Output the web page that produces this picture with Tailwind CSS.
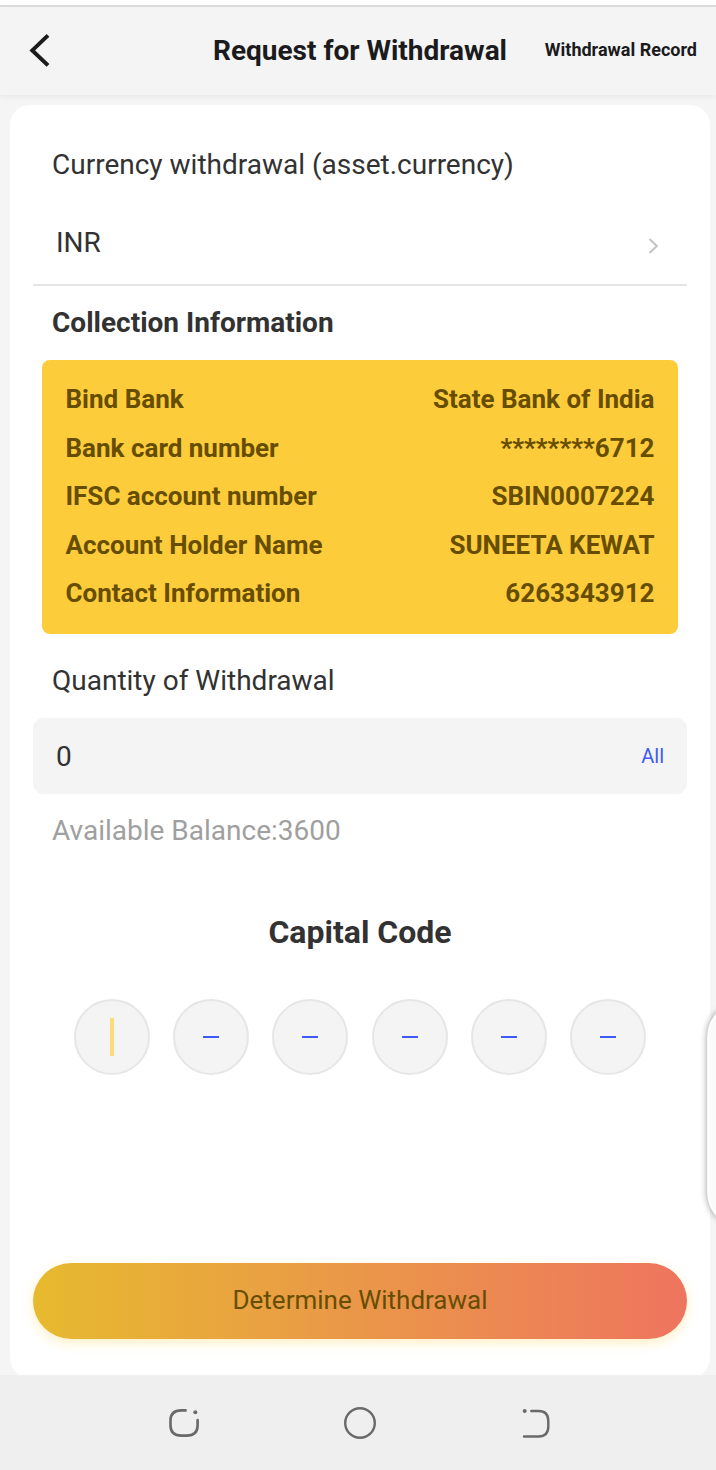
<!DOCTYPE html>
<html lang="en">
<head>
  <meta charset="UTF-8" />
  <meta name="viewport" content="width=device-width, initial-scale=1.0" />
  <title>Request for Withdrawal</title>
  <script src="https://cdn.jsdelivr.net/npm/@tailwindcss/browser@4"></script>
</head>
<body class="relative w-[716px] h-[1470px] overflow-hidden bg-[#f5f5f5] font-['Roboto',sans-serif] text-[28px] leading-10 text-[#323233]">
  <div class="h-[7px] bg-white border-b-2 border-[#dcdcdc]"></div>

  <header class="h-22 pl-1 grid grid-cols-[1fr_auto_1fr] items-center bg-[#f4f4f4] text-[#1b1b1d] shadow-[0_2px_5px_rgba(0,0,0,0.05)]">
    <button class="pl-6 justify-self-start" aria-label="Back">
      <svg class="block w-6 h-9" viewBox="0 0 24 36" fill="none" stroke="currentColor" stroke-width="4"><path d="M20 2.4 4.3 17.4 20 32.4"/></svg>
    </button>
    <h1 id="title" class="font-bold whitespace-nowrap">Request for Withdrawal</h1>
    <a id="record" class="justify-self-end pr-[19px] -mt-[2px] text-[18px] font-bold whitespace-nowrap">Withdrawal Record</a>
  </header>

  <main class="w-[700px] h-[1273px] ml-[10px] mt-[10px] px-[23px] pt-10 flex flex-col bg-white rounded-[20px]">
    <p class="px-[19px]">Currency withdrawal (asset.currency)</p>
    <div class="h-[81px] mt-5 pl-[23px] pr-7 pb-[3px] flex items-center justify-between border-b-2 border-[#e5e5e5]">
      <span>INR</span>
      <svg class="w-[12px] h-[18px] mt-[6px]" viewBox="0 0 12 18" fill="none" stroke="#c3c3c3" stroke-width="2"><path d="M2.5 2 9.8 9 2.5 16"/></svg>
    </div>

    <h2 class="px-[19px] mt-[17px] font-bold">Collection Information</h2>
    <dl class="h-[274px] mx-[9px] mt-[17px] px-[23.5px] py-[15px] grid grid-cols-[auto_auto] auto-rows-[48.5px] items-center justify-between rounded-lg bg-[#fdcc3a] text-[26px] font-bold text-[#664d00]">
      <dt>Bind Bank</dt><dd class="text-right">State Bank of India</dd>
      <dt>Bank card number</dt><dd class="text-right">********6712</dd>
      <dt>IFSC account number</dt><dd class="text-right">SBIN0007224</dd>
      <dt>Account Holder Name</dt><dd class="text-right">SUNEETA KEWAT</dd>
      <dt>Contact Information</dt><dd class="text-right">6263343912</dd>
    </dl>

    <p class="px-[19px] mt-[27px]">Quantity of Withdrawal</p>
    <div class="h-[76px] mt-[17px] px-[23px] flex items-center justify-between rounded-[11px] bg-[#f4f4f4]">
      <span class="pt-[2px]">0</span>
      <button class="text-[20px] text-[#3f5bf6]">All</button>
    </div>
    <p class="px-[19px] mt-[17px] text-[#9f9f9f]">Available Balance:3600</p>

    <h2 class="mt-[61px] text-center text-[32px] font-bold">Capital Code</h2>
    <div class="mt-[47px] mx-[41px] flex justify-between">
      <div class="size-[76px] flex items-center justify-center rounded-full border-2 border-[#e6e6e6] bg-[#f4f4f4]"><i class="w-1 h-[38px] bg-[#fadb7d]"></i></div>
      <div class="size-[76px] flex items-center justify-center rounded-full border-2 border-[#e6e6e6] bg-[#f4f4f4]"><i class="w-4 h-[2px] bg-[#3f5bf6]"></i></div>
      <div class="size-[76px] flex items-center justify-center rounded-full border-2 border-[#e6e6e6] bg-[#f4f4f4]"><i class="w-4 h-[2px] bg-[#3f5bf6]"></i></div>
      <div class="size-[76px] flex items-center justify-center rounded-full border-2 border-[#e6e6e6] bg-[#f4f4f4]"><i class="w-4 h-[2px] bg-[#3f5bf6]"></i></div>
      <div class="size-[76px] flex items-center justify-center rounded-full border-2 border-[#e6e6e6] bg-[#f4f4f4]"><i class="w-4 h-[2px] bg-[#3f5bf6]"></i></div>
      <div class="size-[76px] flex items-center justify-center rounded-full border-2 border-[#e6e6e6] bg-[#f4f4f4]"><i class="w-4 h-[2px] bg-[#3f5bf6]"></i></div>
    </div>

    <button class="h-[76px] mt-[188px] pb-[2px] shrink-0 rounded-full bg-linear-[90deg,#e7ba2e,#ea9749_50%,#ee745e] text-[26px] text-[#664d00] shadow-[0_4px_12px_rgba(253,204,58,0.3)]">Determine Withdrawal</button>
  </main>

  <!-- edge panel handle -->
  <svg class="absolute right-0 top-[1000px] w-5 h-[230px]" viewBox="0 0 20 230">
    <path class="drop-shadow-[0_0_3px_rgba(0,0,0,0.35)]" d="M24 10Q11 20 11 38V192Q11 209 24 220Z" fill="#fafafa" stroke="#d0d0d0" stroke-width="0.8"/>
    <path d="M24 11.5Q12.2 21 12.2 38V192Q12.2 208 24 218.5" fill="none" stroke="#fff" stroke-width="1.6"/>
  </svg>

  <!-- system navigation -->
  <nav class="absolute inset-x-0 bottom-0 h-[95px] pt-[30px] pl-[166px] pr-[162px] flex items-start justify-between bg-[#efefef]">
    <svg class="size-9" viewBox="166 1405 36 36" fill="none" stroke="#696969" stroke-width="2.6" stroke-linecap="round">
      <path d="M185.6 1410.4H181.5Q170.5 1410.4 170.5 1420.5V1425.5Q170.5 1435.6 181.5 1435.6H186.5Q197.6 1435.6 197.6 1425.5V1420"/>
      <circle cx="195.3" cy="1412.2" r="2" fill="#696969" stroke="none"/>
    </svg>
    <svg class="size-9" viewBox="0 0 36 36" fill="none" stroke="#696969" stroke-width="2.4"><circle cx="18" cy="18" r="14.8"/></svg>
    <svg class="size-9" viewBox="518 1405 36 36" fill="none" stroke="#696969" stroke-width="2.4" stroke-linecap="round">
      <path d="M531.3 1411H538.5Q548.3 1411 548.3 1421V1426.5Q548.3 1436.5 538.5 1436.5H524"/>
      <circle cx="524.7" cy="1411" r="2" fill="#696969" stroke="none"/>
    </svg>
  </nav>
</body>
</html>
